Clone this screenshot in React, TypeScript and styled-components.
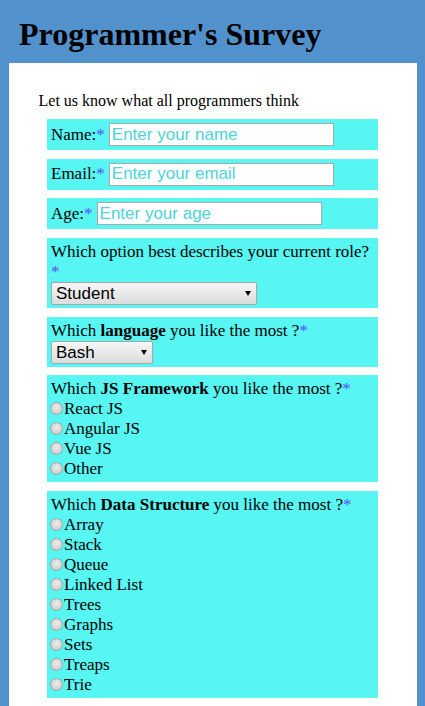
import React from "react";
import styled, { createGlobalStyle } from "styled-components";

const GlobalStyle = createGlobalStyle`
  body {
    margin: 0;
    background-color: #5292cc;
    font-family: "Liberation Serif", "Times New Roman", serif;
    color: #000;
  }
`;

const Header = styled.header`
  padding: 16px 19px 10px;
`;

const Title = styled.h1`
  margin: 0;
  font-size: 32px;
  line-height: 37px;
  font-weight: bold;
`;

const Panel = styled.main`
  width: 96%;
  margin: 0 auto;
  background-color: #fff;
  padding: 29px 0 8px;
`;

const Intro = styled.p`
  margin: 0 0 9px;
  padding-left: 30px;
  font-size: 16px;
  line-height: 18px;
`;

const Field = styled.div<{ $inline?: boolean }>`
  width: 331px;
  box-sizing: border-box;
  margin: 0 auto 8.67px;
  background-color: #58f6f3;
  font-size: 17px;
  line-height: 20px;
  padding: ${(p) => (p.$inline ? "4px" : "4px 4px 3px")};
  display: ${(p) => (p.$inline ? "flex" : "block")};
  align-items: center;
  gap: 4px;
`;

const Req = styled.span`
  color: #5a50ff;
`;

const TextInput = styled.input`
  width: 225px;
  height: 23px;
  box-sizing: border-box;
  border: 1px solid #a9a9a9;
  padding: 1px 2px;
  font-family: "Liberation Sans", Arial, sans-serif;
  font-size: 17px;
  background: #fff;
  outline: none;

  &::placeholder {
    color: #4ed3d8;
  }
`;

const SelectWrap = styled.div`
  position: relative;
  width: fit-content;

  &::after {
    content: "";
    position: absolute;
    right: 6px;
    top: 9px;
    border-left: 3px solid transparent;
    border-right: 3px solid transparent;
    border-top: 5px solid #000;
    pointer-events: none;
  }
`;

const Select = styled.select<{ $width: number }>`
  appearance: none;
  display: block;
  width: ${(p) => p.$width}px;
  height: 23px;
  box-sizing: border-box;
  margin: 0;
  padding: 0 0 0 4px;
  font-family: "Liberation Sans", Arial, sans-serif;
  font-size: 17px;
  color: #000;
  background: linear-gradient(#f6f6f6, #dcdcdc);
  border: 1px solid #a6a6a6;
  border-radius: 2px;
`;

const Option = styled.label`
  display: block;
`;

const Radio = styled.input`
  appearance: none;
  display: inline-block;
  width: 13px;
  height: 13px;
  box-sizing: border-box;
  margin: 0 1px -1px -1px;
  vertical-align: baseline;
  border-radius: 50%;
  border: 1px solid #a2a2a2;
  background: radial-gradient(circle at 50% 38%, #ededed, #c4c4c4);
`;

const frameworks = ["React JS", "Angular JS", "Vue JS", "Other"];
const structures = [
  "Array",
  "Stack",
  "Queue",
  "Linked List",
  "Trees",
  "Graphs",
  "Sets",
  "Treaps",
  "Trie",
];

const App: React.FC = () => {
  return (
    <>
      <GlobalStyle />
      <Header>
        <Title>Programmer's Survey</Title>
      </Header>
      <Panel>
        <Intro>Let us know what all programmers think</Intro>

        <Field $inline>
          <span>
            Name:<Req>*</Req>
          </span>
          <TextInput placeholder="Enter your name" />
        </Field>
        <Field $inline>
          <span>
            Email:<Req>*</Req>
          </span>
          <TextInput placeholder="Enter your email" />
        </Field>
        <Field $inline>
          <span>
            Age:<Req>*</Req>
          </span>
          <TextInput placeholder="Enter your age" />
        </Field>

        <Field>
          <div>
            Which option best describes your current role?<Req>*</Req>
          </div>
          <SelectWrap>
            <Select $width={206} defaultValue="Student">
              <option>Student</option>
              <option>Full Time Job</option>
              <option>Full Time Learner</option>
              <option>Prefer not to say</option>
              <option>Other</option>
            </Select>
          </SelectWrap>
        </Field>

        <Field>
          <div>
            Which <b>language</b> you like the most ?<Req>*</Req>
          </div>
          <SelectWrap>
            <Select $width={102} defaultValue="Bash">
              <option>Bash</option>
              <option>C++</option>
              <option>Java</option>
              <option>Python</option>
              <option>JavaScript</option>
            </Select>
          </SelectWrap>
        </Field>

        <Field>
          <div>
            Which <b>JS Framework</b> you like the most ?<Req>*</Req>
          </div>
          {frameworks.map((f) => (
            <Option key={f}>
              <Radio type="radio" name="framework" value={f} />
              {f}
            </Option>
          ))}
        </Field>

        <Field>
          <div>
            Which <b>Data Structure</b> you like the most ?<Req>*</Req>
          </div>
          {structures.map((s) => (
            <Option key={s}>
              <Radio type="radio" name="structure" value={s} />
              {s}
            </Option>
          ))}
        </Field>
      </Panel>
    </>
  );
};

export default App;
